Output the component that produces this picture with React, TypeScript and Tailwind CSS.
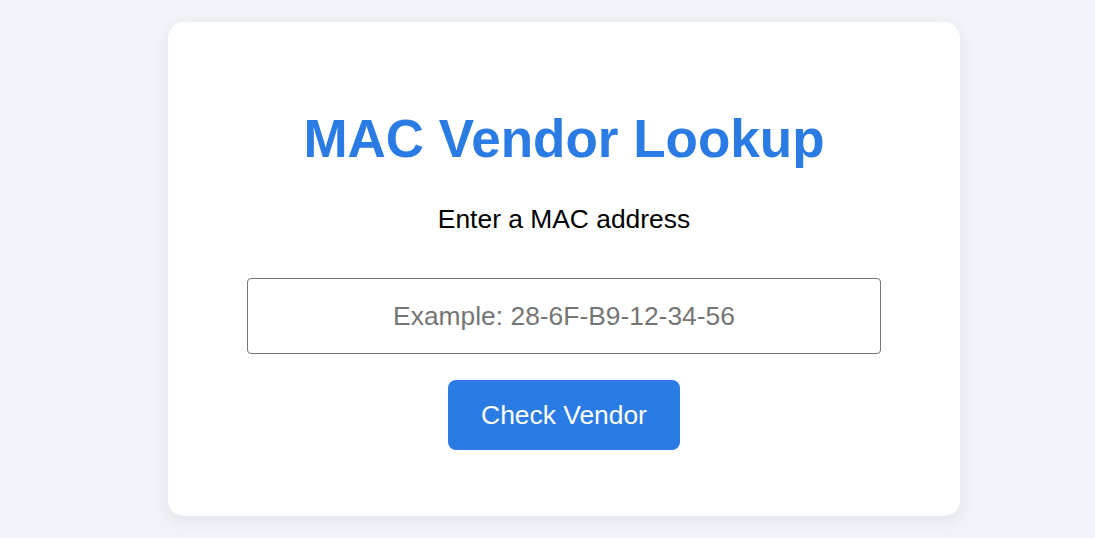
export default function App() {
  return (
    <div className="min-h-screen bg-[#f1f4f9] pt-[22px] pb-[22px] font-['Liberation_Sans',Arial,sans-serif]">
      <div className="ml-[168px] flex w-[792px] flex-col items-center rounded-[16px] bg-white pt-[87px] pb-[66px] shadow-[0_4px_18px_rgba(0,0,0,0.08)]">
        <h1 className="text-[53px] leading-[60px] font-bold text-[#2b7be4]">MAC Vendor Lookup</h1>
        <p className="mt-[35px] text-[26.4px] leading-[30px] text-black">Enter a MAC address</p>
        <input
          type="text"
          placeholder="Example: 28-6F-B9-12-34-56"
          className="mt-[44px] h-[76px] w-[634px] rounded-[4px] border border-[#767676] bg-white px-3 text-center text-[26.4px] text-black outline-none placeholder:text-[#757575]"
        />
        <button
          type="button"
          className="mt-[26px] h-[70px] w-[232px] rounded-[8px] bg-[#2b7be4] text-[26.4px] leading-[30px] text-white"
        >
          Check Vendor
        </button>
      </div>
    </div>
  )
}
